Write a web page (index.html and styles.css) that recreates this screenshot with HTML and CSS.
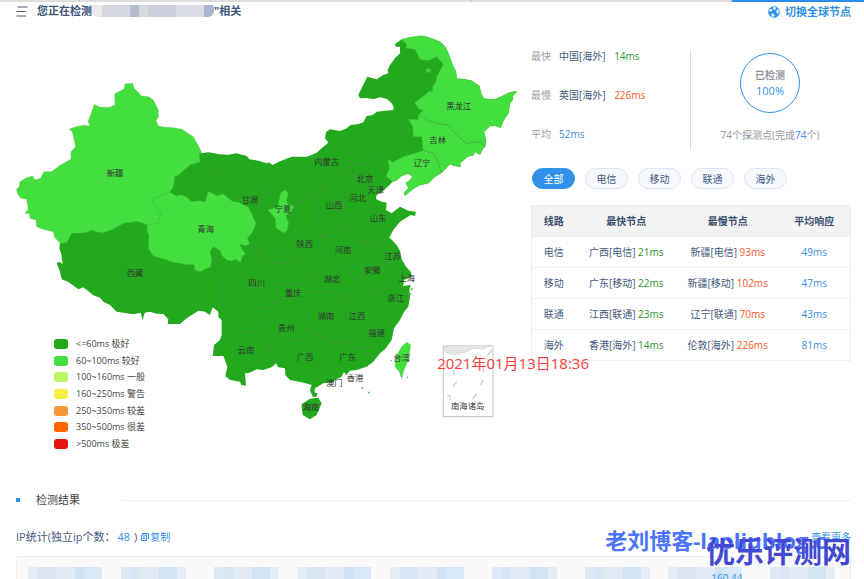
FILE: index.html
```html
<!DOCTYPE html>
<html lang="zh-CN">
<head>
    <meta charset="UTF-8">
    <meta name="viewport" content="width=device-width, initial-scale=1.0">
    <title>网站测速</title>
    <link rel="stylesheet" href="styles.css">
</head>
<body>
    <div class="top-tabs"><span></span><span></span><span></span><span></span><span class="current"></span></div>

    <header class="page-header">
        <h1>
            <svg class="menu-icon" viewBox="0 0 12 11"><path d="M1.500 1h10M.5 5.500h9M.5 10h9.500"/></svg>
            <span>您正在检测</span><span class="masked"></span><span>"相关</span>
        </h1>
        <a class="switch" href="#">
            <svg viewBox="0 0 12 12">
                <circle cx="6" cy="6" r="5.800" fill="#3191e8"/>
                <path d="M1 4.200L2.800 3l1.700.5L3.800 5 2 5.800zM5.500 1l2 .2.300 1.800L6.500 4 5 2.800zM9 3.500l1.600.5.3 2.200L9.500 8 8.300 6zM3.500 7.500L6 8l.5 1.500L5 11l-1.500-1z" fill="#fff"/>
            </svg>
            切换全球节点
        </a>
    </header>

    <main class="overview">
        <section class="map-panel">
            <svg class="map" viewBox="48 90 1545 1260">
                <!-- whole country -->
                <path class="best" d="M606 460L625 457 660 463 685 464 710 460 740 468 748 478 775 482 800 490 806 487 818 495 840 484 875 470 920 470 950 458 968 442 985 428 975 415 978 396 990 388 1008 391 1020 393 1038 386 1052 375 1075 372 1090 367 1100 348 1118 345 1130 335 1155 332 1180 330 1181 322 1175 310 1160 296 1140 292 1120 298 1100 294 1080 295 1075 285 1088 257 1102 230 1118 235 1130 238 1148 226 1165 220 1163 210 1170 195 1186 173 1200 160 1200 140 1187 140 1185 132 1205 118 1235 111 1265 107 1292 114 1320 125 1336 141 1345 160 1356 190 1368 215 1370 236 1390 237 1415 242 1438 258 1444 282 1452 296 1485 298 1512 286 1530 277 1551 274 1537 290 1540 298 1530 310 1525 340 1510 363 1502 383 1488 378 1470 378 1452 395 1458 420 1456 438 1447 449 1440 464 1425 455 1420 466 1402 470 1380 490 1382 500 1362 497 1350 492 1340 503 1325 518 1305 530 1285 550 1260 555 1240 566 1215 587 1213 578 1225 564 1218 548 1228 543 1237 530 1225 520 1205 528 1190 541 1178 545 1150 573 1130 585 1128 597 1145 605 1160 608 1158 630 1175 640 1200 620 1225 632 1248 635 1245 648 1232 645 1200 665 1180 690 1168 712 1190 735 1200 752 1205 778 1218 800 1232 815 1235 830 1212 840 1210 858 1232 855 1228 870 1230 890 1225 920 1212 936 1200 960 1182 985 1175 1020 1155 1048 1140 1060 1120 1085 1100 1100 1070 1110 1050 1112 1038 1125 1032 1115 1025 1130 1010 1138 1000 1146 970 1150 945 1165 943 1177 952 1180 950 1190 938 1190 930 1170 935 1155 905 1147 870 1140 856 1125 855 1105 835 1102 828 1090 815 1102 790 1110 770 1108 748 1118 735 1120 738 1157 724 1155 720 1145 690 1140 676 1128 682 1100 670 1068 638 1068 642 1035 660 1020 665 1005 665 960 655 950 655 935 638 922 630 945 615 935 595 932 560 955 540 972 503 972 505 958 490 942 470 941 450 935 434 938 428 960 422 938 400 943 350 935 330 915 310 905 300 893 280 886 250 862 235 868 205 846 185 838 180 815 170 790 177 785 188 792 184 763 178 745 180 730 250 500 480 420z"/>
                <!-- Xinjiang -->
                <path class="good" d="M375 252L398 250 402 265 413 275 425 288 445 290 460 300 475 330 475 350 468 362 475 378 495 382 520 383 545 388 580 410 592 432 606 460 598 462 600 485 570 495 535 525 524 530 520 560 510 577 455 598 470 620 482 640 475 670 443 675 425 668 410 664 370 670 340 687 310 698 290 696 275 690 255 698 215 700 200 728 180 730 163 710 160 695 130 688 110 680 108 660 90 655 88 640 75 640 85 628 80 598 62 594 52 580 50 568 58 560 60 545 80 533 98 528 105 540 122 535 132 515 155 515 180 496 213 478 213 455 227 440 217 395 207 387 230 380 250 376 270 378 264 365 272 345 283 313 300 322 330 322 345 315 344 282 360 273 372 268z"/>
                <!-- Qinghai -->
                <path class="good" d="M510 577L530 588 545 585 560 592 575 605 600 602 615 606 620 590 625 575 638 580 650 588 670 582 685 595 700 606 712 606 725 612 745 622 755 640 760 655 768 670 758 695 742 715 748 728 745 735 732 736 718 732 726 748 737 762 726 770 722 787 705 777 696 783 680 780 665 766 660 750 640 740 630 755 635 778 632 800 615 808 600 815 584 810 584 798 578 792 560 794 540 790 515 785 495 778 460 768 445 745 447 710 441 690 443 675 475 670 482 640 455 598z"/>
                <!-- Ningxia -->
                <path class="good" d="M855 570L865 580 860 600 863 612 882 618 872 635 857 645 866 670 862 688 855 700 828 685 826 655 803 630 833 622 842 580z"/>
                <!-- Heilongjiang, Jilin, Liaoning -->
                <path class="good" d="M1205 118L1235 111 1265 107 1292 114 1320 125 1336 141 1345 160 1356 190 1368 215 1370 236 1390 237 1415 242 1438 258 1444 282 1452 296 1485 298 1512 286 1530 277 1551 274 1537 290 1540 298 1530 310 1525 340 1510 363 1502 383 1488 378 1470 378 1452 395 1458 420 1456 438 1447 449 1440 464 1425 455 1420 466 1402 470 1380 490 1382 500 1362 497 1350 492 1340 503 1325 518 1305 530 1285 550 1260 555 1240 566 1215 587 1213 578 1225 564 1218 548 1228 543 1237 530 1225 520 1205 528 1190 541 1178 545 1158 530 1168 505 1164 478 1178 487 1210 470 1245 460 1270 452 1265 410 1240 410 1238 380 1226 357 1255 360 1256 345 1270 330 1258 328 1244 308 1268 290 1290 272 1297 277 1298 262 1308 245 1310 230 1330 193 1310 170 1285 182 1260 178 1245 148 1218 145 1220 132z"/>
                <path class="good" d="M1278 208l8-4 6 6-2 8-10-2z"/>
                <!-- Taiwan, Hainan -->
                <path class="good" d="M1220 1027L1232 1035 1225 1080 1213 1107 1205 1135 1198 1115 1185 1100 1188 1070 1205 1040z"/>
                <path class="best" d="M905 1213L930 1196 955 1193 965 1210 950 1245 930 1258 908 1245 905 1220z"/>
                <path class="best" d="M1232 867l6-4-2 9zM1228 880l6 0-4 6zM1085 1162h4v4h-4zM1105 1175h4v5h-4zM1220 1130h4v3h-4zM1172 1080h3v3h-3z"/>
                <!-- province borders -->
                <path class="border" d="M632 465L642 500 655 520 680 525 692 515 700 528 682 550 705 560 730 582 770 570 798 568 790 598 760 615 803 630M882 618L905 612 925 580 962 565 1000 540 1040 530 1038 490 1055 480 1075 495 1105 488 1130 465 1142 475 1138 500 1150 520 1170 540M962 565L955 610 960 650 950 690 965 710 995 705 1025 685 1030 640 1025 590 1035 560M1050 500L1060 530 1105 525 1110 550 1120 580M882 640L880 650 905 680 900 705 870 700M855 705L855 745 830 760 822 790 880 790 900 800 930 820 940 850M640 770L655 800 665 830 672 860 668 910 690 920 710 945 735 990 765 995 790 960 780 930 800 925 830 930M745 735L765 740 775 762 805 775 812 785 880 790M965 710L960 740 975 770 1000 790 1040 800 1070 815 1085 840 1100 865 1140 870 1170 830M1025 685L1060 700 1075 720 1110 730 1160 720M1075 720L1085 750 1070 780 1080 800M1110 730L1130 755 1150 770 1165 800 1185 820M930 820L900 850 890 880 850 900 830 900 830 860 870 850 890 850M940 880L985 870 1020 880 1035 890 1050 880 1080 865M1035 890L1045 930 1035 960 1045 1000 1035 1030M920 900L925 940 920 980 930 1005 900 1020 860 1030 810 1040 795 1020 810 990 800 950M930 1005L965 1000 975 1025 1000 1030 1050 1025 1080 1045 1110 1040M1140 870L1145 910 1125 930 1110 970 1100 1010 1090 1035M810 1040L805 1060 828 1090M975 1025L980 1080 955 1110 945 1140M1145 910L1170 940 1195 955M1260 345L1280 360 1310 370 1345 375 1375 410 1400 430 1440 425 1456 438M1270 452L1300 460 1315 490 1325 518M1285 182L1285 225 1300 245"/>
                <!-- South China Sea inset -->
                <rect class="inset" x="1330" y="1038" width="149" height="212"/>
                <path class="inset-land" d="M1330 1045L1345 1036H1472L1450 1048 1420 1044 1400 1055 1365 1064 1340 1058z"/>
                <path class="inset-line" d="M1475 1050L1462 1067M1358 1110L1364 1125M1370 1146L1358 1160M1450 1140L1441 1155M1342 1186L1350 1186 1350 1200M1429 1182L1418 1198M1450 1095V1117"/>

                <g class="labels">
                    <text x="345" y="528">新疆</text>
                    <text x="405" y="828">西藏</text>
                    <text x="617" y="697">青海</text>
                    <text x="750" y="608">甘肃</text>
                    <text x="849" y="637">宁夏</text>
                    <text x="980" y="495">内蒙古</text>
                    <text x="1376" y="326">黑龙江</text>
                    <text x="1313" y="429">吉林</text>
                    <text x="1266" y="498">辽宁</text>
                    <text x="1095" y="546">北京</text>
                    <text x="1127" y="578">天津</text>
                    <text x="1073" y="602">河北</text>
                    <text x="1002" y="624">山西</text>
                    <text x="1134" y="663">山东</text>
                    <text x="914" y="741">陕西</text>
                    <text x="1029" y="758">河南</text>
                    <text x="1178" y="777">江苏</text>
                    <text x="1117" y="820">安徽</text>
                    <text x="1220" y="842">上海</text>
                    <text x="996" y="845">湖北</text>
                    <text x="770" y="858">四川</text>
                    <text x="880" y="887">重庆</text>
                    <text x="1187" y="903">浙江</text>
                    <text x="978" y="956">湖南</text>
                    <text x="1071" y="956">江西</text>
                    <text x="1130" y="1008">福建</text>
                    <text x="859" y="993">贵州</text>
                    <text x="738" y="1058">云南</text>
                    <text x="915" y="1081">广西</text>
                    <text x="1043" y="1081">广东</text>
                    <text x="1205" y="1084">台湾</text>
                    <text x="1065" y="1142">香港</text>
                    <text x="1003" y="1158">澳门</text>
                    <text x="933" y="1230">海南</text>
                    <text x="1403" y="1228">南海诸岛</text>
                </g>
            </svg>
            <ul class="legend">
                <li><i class="l1"></i>&lt;=60ms 极好</li>
                <li><i class="l2"></i>60~100ms 较好</li>
                <li><i class="l3"></i>100~160ms 一般</li>
                <li><i class="l4"></i>160~250ms 警告</li>
                <li><i class="l5"></i>250~350ms 较差</li>
                <li><i class="l6"></i>350~500ms 很差</li>
                <li><i class="l7"></i>&gt;500ms 极差</li>
            </ul>
            <div class="stamp">2021年01月13日18:36</div>
        </section>

        <section class="stats">
            <div class="summary">
                <dl class="speeds">
                    <div><dt>最快</dt><dd>中国[海外] <b class="fast">14ms</b></dd></div>
                    <div><dt>最慢</dt><dd>英国[海外] <b class="slow">226ms</b></dd></div>
                    <div><dt>平均</dt><dd><b class="avg">52ms</b></dd></div>
                </dl>
                <div class="progress">
                    <div class="ring"><span>已检测</span><strong>100%</strong></div>
                    <p>74个探测点(完成<b class="avg">74</b>个)</p>
                </div>
            </div>

            <div class="filters">
                <button class="active">全部</button>
                <button>电信</button>
                <button>移动</button>
                <button>联通</button>
                <button>海外</button>
            </div>

            <table>
                <thead>
                    <tr><th class="col-line">线路</th><th class="col-node">最快节点</th><th class="col-node">最慢节点</th><th class="col-avg">平均响应</th></tr>
                </thead>
                <tbody>
                    <tr><td>电信</td><td>广西[电信] <b class="fast">21ms</b></td><td>新疆[电信] <b class="slow">93ms</b></td><td class="avg">49ms</td></tr>
                    <tr><td>移动</td><td>广东[移动] <b class="fast">22ms</b></td><td>新疆[移动] <b class="slow">102ms</b></td><td class="avg">47ms</td></tr>
                    <tr><td>联通</td><td>江西[联通] <b class="fast">23ms</b></td><td>辽宁[联通] <b class="slow">70ms</b></td><td class="avg">43ms</td></tr>
                    <tr><td>海外</td><td>香港[海外] <b class="fast">14ms</b></td><td>伦敦[海外] <b class="slow">226ms</b></td><td class="avg">81ms</td></tr>
                </tbody>
            </table>
        </section>
    </main>

    <section class="results">
        <h2>检测结果</h2>
        <div class="ip-row">
            <span>IP统计(独立ip个数：<b class="avg count">48</b>)</span>
            <a class="copy" href="#"><svg viewBox="0 0 8 8"><path d="M1 .5h6.500v5.500M.5 2h5v5.500h-5zM2 4h2M2 5.500h2"/></svg>复制</a>
            <a class="more" href="#">查看更多</a>
        </div>
        <div class="ip-list">
            <i class="ip wide-end"></i><i class="ip"></i><i class="ip"></i><i class="ip wide"></i><i class="ip wide"></i><i class="ip"></i><i class="ip"></i><i class="ip wide part">160.44</i><i class="ip"></i>
        </div>
        <div class="mark mark-blog">老刘博客-laoliublog.c</div>
        <div class="mark mark-site">优乐评测网</div>
    </section>
</body>
</html>
```

FILE: styles.css
```css
* {
    box-sizing: border-box;
}

body {
    margin: 0;
    background: #fff;
    color: #455a7c;
    font-family: "Open Sans", "Noto Sans CJK SC", sans-serif;
    font-size: 10px;
    line-height: 16px;
}

h1, h2, p, dl, dd, ul {
    margin: 0;
    padding: 0;
}

b {
    font-weight: normal;
}

a {
    color: #3191e8;
    text-decoration: none;
}

.fast {
    color: #2f9331;
}

.slow {
    color: #ff5722;
}

.avg {
    color: #3a8ee6;
}

/* top */
.top-tabs {
    display: grid;
    grid-template-columns: 80px 131px 1fr 1fr 132px;
    height: 2px;
    background: #dedede;
}

.top-tabs span {
    border-right: 1px solid #c4c4c4;
}

.top-tabs .current {
    background: #2d8cf0;
    border: 0;
}

.page-header {
    display: flex;
    justify-content: space-between;
    height: 28px;
    padding: 1px 13px 0 16px;
}

.page-header h1 {
    display: flex;
    align-items: center;
    height: 16px;
    font-size: 11px;
    color: #3b5478;
}

.menu-icon {
    width: 12px;
    height: 11px;
    margin-right: 9px;
    fill: none;
    stroke: #455a7c;
}

.masked {
    width: 122px;
    height: 12px;
    border-radius: 2px 2px 6px 6px;
    background: linear-gradient(90deg, #ebebee 0 10px, #d5d8e2 10px 38px, #b5bccd 38px 47px, #d8dae2 47px 56px, #ccd1dd 56px 84px, #dadde5 84px 112px, #aab6cd 112px);
}

.switch {
    display: flex;
    align-items: center;
    gap: 5px;
    height: 18px;
    font-size: 11px;
    font-weight: bold;
}

.switch svg {
    width: 12px;
    height: 12px;
}

/* map */
.overview {
    display: grid;
    grid-template-columns: minmax(0, 1fr) 320px;
    padding: 0 13px 0 16px;
}

.map-panel {
    position: relative;
    display: grid;
    align-items: start;
}

.map {
    grid-area: 1 / 1;
    width: 100%;
    overflow: visible;
}

.best {
    fill: #23a91d;
}

.good {
    fill: #43df3e;
    stroke: #4cb846;
    stroke-width: 1;
}

.border {
    fill: none;
    stroke: #4f8a49;
    stroke-width: 3;
    stroke-dasharray: 9 3;
    stroke-linejoin: round;
    opacity: .7;
}

.inset {
    fill: none;
    stroke: #c4c4c4;
    stroke-width: 3;
}

.inset-land {
    fill: #e6e6e6;
    stroke: #ccc;
    stroke-width: 2;
}

.inset-line {
    fill: none;
    stroke: #ccc;
    stroke-width: 4;
}

.labels {
    fill: #333;
    font-size: 25px;
    text-anchor: middle;
}

.legend {
    grid-area: 1 / 1;
    align-self: end;
    display: flex;
    flex-direction: column;
    justify-content: space-between;
    height: 112px;
    margin-left: 38px;
    list-style: none;
    color: #444;
    font-size: 9px;
    line-height: 12px;
}

.legend li {
    display: flex;
    align-items: center;
    gap: 8px;
}

.legend i {
    width: 14px;
    height: 10px;
    border-radius: 3px;
}

.l1 { background: #23a91d; }
.l2 { background: #43df3e; }
.l3 { background: #bdf663; }
.l4 { background: #f6ee45; }
.l5 { background: #f79836; }
.l6 { background: #ff6600; }
.l7 { background: #e6150f; }

/* capture time, lies over map and table */
.stamp {
    position: absolute;
    right: -58px;
    bottom: 77px;
    color: #fb3939;
    font-size: 15px;
    line-height: 20px;
    white-space: nowrap;
}

/* stats */
.summary {
    display: grid;
    grid-template-columns: 159px 1fr;
    height: 100px;
    margin-top: 20px;
}

.speeds {
    display: flex;
    flex-direction: column;
    justify-content: space-between;
    height: 94px;
    margin-top: -2px;
}

.speeds div {
    display: flex;
    gap: 8px;
}

.speeds dt {
    color: #999fa8;
}

.speeds dd b {
    margin-left: 6px;
}

.speeds dd .avg {
    margin-left: 0;
}

.progress {
    display: flex;
    flex-direction: column;
    align-items: center;
    padding: 3px 2px 0 0;
    border-left: 1px solid #dedfe3;
    color: #8f96a0;
}

.ring {
    display: flex;
    flex-direction: column;
    align-items: center;
    justify-content: center;
    width: 60px;
    height: 60px;
    border: 1px solid #3191e8;
    border-radius: 50%;
}

.ring span {
    font-weight: bold;
}

.ring strong {
    color: #3191e8;
    font-size: 11px;
    font-weight: normal;
}

.progress p {
    margin-top: 14px;
}

.filters {
    display: flex;
    gap: 10px;
    margin: 18px 0 0 1px;
}

.filters button {
    width: 43px;
    height: 21px;
    padding: 0;
    border: 1px solid #dfe4ec;
    border-radius: 11px;
    background: #f6f9fe;
    color: #455a7c;
    font: inherit;
}

.filters .active {
    border-color: #3191e8;
    background: #3191e8;
    color: #fff;
}

table {
    width: 100%;
    margin-top: 16px;
    border-collapse: collapse;
    border: 1px solid #eee;
    table-layout: fixed;
    text-align: center;
}

th, td {
    height: 31px;
    padding: 0;
    border-bottom: 1px solid #eee;
}

th {
    background: #f3f3f3;
    color: #3b4f70;
}

.col-line {
    width: 44px;
}

.col-avg {
    width: 72px;
}

/* results */
.results {
    position: relative;
    padding: 42px 13px 0 16px;
}

.results h2 {
    display: flex;
    align-items: center;
    color: #444;
    font-size: 11px;
    font-weight: normal;
}

.results h2::before {
    content: "";
    width: 4px;
    height: 4px;
    margin-right: 16px;
    background: #3191e8;
}

.results h2::after {
    content: "";
    flex: 1;
    height: 1px;
    margin-left: 42px;
    background: #f0f0f0;
}

.ip-row {
    display: flex;
    align-items: center;
    gap: 4px;
    margin-top: 21px;
    font-size: 11px;
}

.count {
    margin: 0 4px 0 2px;
}

.copy {
    display: flex;
    align-items: center;
    gap: 1px;
    font-size: 10px;
}

.copy svg {
    width: 8px;
    height: 8px;
    fill: none;
    stroke: #3191e8;
}

.more {
    margin-left: auto;
    font-size: 10px;
}

.ip-list {
    display: flex;
    justify-content: space-between;
    height: 23px;
    margin-top: 11px;
    padding: 10px 15px 0 11px;
    border: 1px solid #eee;
    border-bottom: 0;
    background: #f9f9f9;
}

/* masked addresses */
.ip {
    width: 65px;
    height: 12px;
    background: linear-gradient(90deg, #dde9f6 0 10px, #d6e6f5 10px 19px, #e0eaf5 19px 38px, #d2e4f4 38px 56px, #e4edf6 56px);
    color: #3191e8;
    font-style: normal;
    overflow: hidden;
}

.ip.wide, .ip.wide-end {
    width: 74px;
    margin-left: -9px;
    background: linear-gradient(90deg, #e4edf6 0 10px, #d8e6f4 10px 28px, #e0ebf7 28px 47px, #cfe3f4 47px 56px, #d8e8f6 56px);
}

.ip.wide-end {
    margin: 0 -9px 0 0;
}

.ip.part {
    padding-left: 43px;
    line-height: 22px;
}

/* watermarks */
.mark {
    position: absolute;
    font-weight: bold;
    white-space: nowrap;
}

.mark-blog {
    right: 38px;
    top: 76px;
    color: #4b74fb;
    font-size: 22px;
    line-height: 28px;
}

.mark-site {
    right: 13px;
    top: 84px;
    color: #4249d0;
    font-size: 29px;
    line-height: 36px;
}
```
